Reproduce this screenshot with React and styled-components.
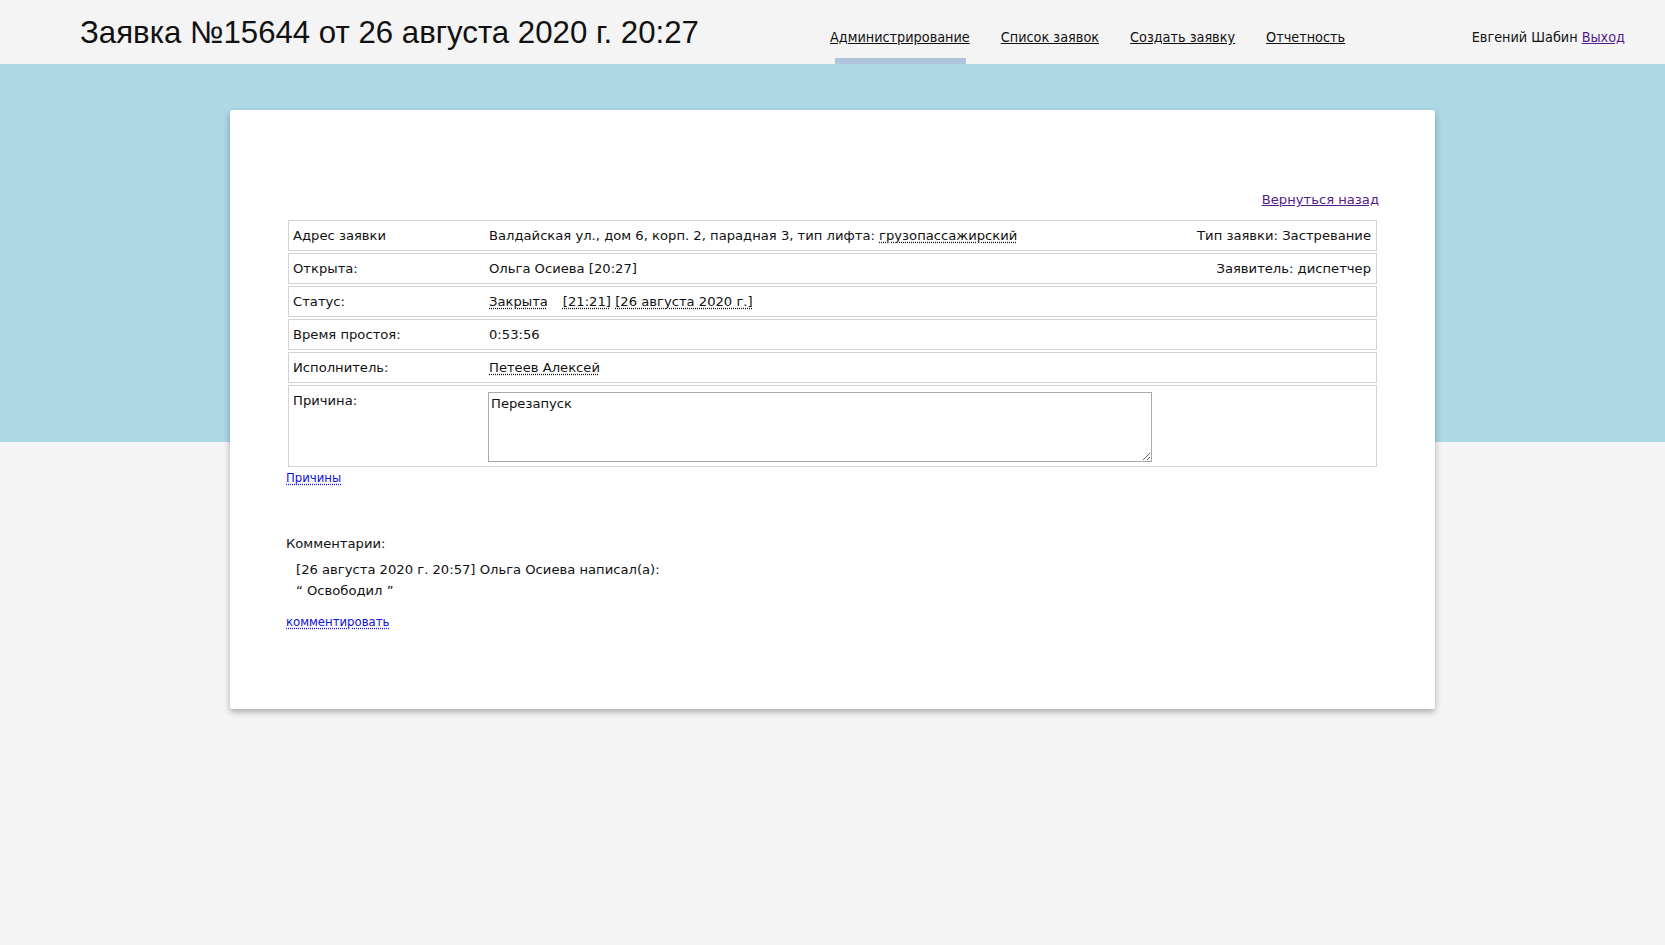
import React from "react";
import styled, { createGlobalStyle } from "styled-components";

const GlobalStyle = createGlobalStyle`
  html, body {
    margin: 0;
    padding: 0;
    background: #f4f4f4;
  }
  body {
    font-family: "DejaVu Sans", Verdana, sans-serif;
    font-size: 13.15px;
    color: #111;
  }
`;

const Header = styled.header`
  display: flex;
  height: 64px;
  background: #f4f4f4;
`;

const TitleBox = styled.div`
  flex: 0 0 830px;
  box-sizing: border-box;
  padding: 2px 0 0 80px;
  display: flex;
  align-items: center;
`;

const Title = styled.h1`
  margin: 0;
  font-family: "Liberation Sans", Arial, sans-serif;
  font-weight: normal;
  font-size: 31.2px;
  color: #111;
`;

const Nav = styled.nav`
  flex: 1;
  display: flex;
  gap: 31px;
`;

const NavItem = styled.div`
  display: flex;
  flex-direction: column;
  height: 64px;
`;

const NavLink = styled.a`
  flex: 1;
  display: flex;
  align-items: center;
  padding-top: 16px;
  font-family: "DejaVu Sans Condensed", Tahoma, sans-serif;
  font-size: 14.3px;
  color: #111;
  text-decoration: underline;
  cursor: pointer;
`;

const ActiveBar = styled.div`
  height: 6px;
  margin: 0 4px 0 5px;
  background: ${(p) => (p.$on ? "#b0c4de" : "transparent")};
`;

const User = styled.div`
  display: flex;
  align-items: center;
  padding: 10px 40px 0 0;
  font-family: "DejaVu Sans Condensed", Tahoma, sans-serif;
  font-size: 14.3px;
  color: #111;
  gap: 4px;
`;

const Visited = styled.a`
  color: #551a8b;
  text-decoration: underline;
  cursor: pointer;
`;

const Page = styled.main`
  background: linear-gradient(#add8e6 0, #add8e6 378px, #f4f4f4 378px);
  padding-top: 46px;
  min-height: 881px;
  box-sizing: border-box;
`;

const Card = styled.section`
  width: 1205px;
  min-height: 599px;
  box-sizing: border-box;
  margin: 0 auto;
  background: #fff;
  border-radius: 2px;
  box-shadow: 0 3px 6px rgba(0, 0, 0, 0.3);
  padding: 81px 56px 40px;
`;

const BackRow = styled.div`
  text-align: right;
  line-height: 18px;
  margin-bottom: 11px;
`;

const Rows = styled.div`
  display: flex;
  flex-direction: column;
  gap: 2px;
  padding: 0 2px;
`;

const Row = styled.div`
  display: grid;
  grid-template-columns: 196px 1fr auto;
  align-items: ${(p) => (p.$tall ? "start" : "center")};
  min-height: 31px;
  box-sizing: border-box;
  border: 1px solid #d3d3d3;
  padding: ${(p) => (p.$tall ? "6px 5px 4px 4px" : "1px 5px 0 4px")};
  line-height: 18px;
`;

const Label = styled.div``;

const Value = styled.div`
  white-space: nowrap;
`;

const Side = styled.div`
  text-align: right;
  white-space: nowrap;
`;

const Abbr = styled.span`
  text-decoration: underline dotted;
  text-underline-offset: 2px;
  margin-left: ${(p) => p.$gap || 0}px;
`;

const Reason = styled.textarea`
  display: block;
  width: 664px;
  height: 70px;
  box-sizing: border-box;
  margin: 0 0 0 -1px;
  padding: 2px;
  border: 1px solid #a9a9a9;
  font-family: "DejaVu Sans", Verdana, sans-serif;
  font-size: 13.15px;
  color: #111;
  line-height: 17px;
  resize: both;
`;

const DotLink = styled.a`
  font-family: "DejaVu Sans Condensed", Tahoma, sans-serif;
  font-size: 13px;
  color: #1010e0;
  text-decoration: underline dotted;
  text-underline-offset: 2px;
  cursor: pointer;
`;

const Block = styled.div`
  line-height: 20px;
  margin-top: ${(p) => p.$mt || 0}px;
  padding-left: ${(p) => p.$indent || 0}px;
`;

export default function App() {
  return (
    <>
      <GlobalStyle />
      <Header>
        <TitleBox>
          <Title>Заявка №15644 от 26 августа 2020 г. 20:27</Title>
        </TitleBox>
        <Nav>
          {["Администрирование", "Список заявок", "Создать заявку", "Отчетность"].map(
            (t, i) => (
              <NavItem key={t}>
                <NavLink>{t}</NavLink>
                <ActiveBar $on={i === 0} />
              </NavItem>
            )
          )}
        </Nav>
        <User>
          <span>Евгений Шабин</span>
          <Visited>Выход</Visited>
        </User>
      </Header>

      <Page>
        <Card>
          <BackRow>
            <Visited>Вернуться назад</Visited>
          </BackRow>
          <Rows>
            <Row>
              <Label>Адрес заявки</Label>
              <Value>
                Валдайская ул., дом 6, корп. 2, парадная 3, тип лифта:{" "}
                <Abbr>грузопассажирский</Abbr>
              </Value>
              <Side>Тип заявки: Застревание</Side>
            </Row>
            <Row>
              <Label>Открыта:</Label>
              <Value>Ольга Осиева [20:27]</Value>
              <Side>Заявитель: диспетчер</Side>
            </Row>
            <Row>
              <Label>Статус:</Label>
              <Value>
                <Abbr>Закрыта</Abbr>
                <Abbr $gap={15}>[21:21]</Abbr> <Abbr>[26 августа 2020 г.]</Abbr>
              </Value>
              <Side />
            </Row>
            <Row>
              <Label>Время простоя:</Label>
              <Value>0:53:56</Value>
              <Side />
            </Row>
            <Row>
              <Label>Исполнитель:</Label>
              <Value>
                <Abbr>Петеев Алексей</Abbr>
              </Value>
              <Side />
            </Row>
            <Row $tall>
              <Label>Причина:</Label>
              <Value>
                <Reason defaultValue="Перезапуск" />
              </Value>
              <Side />
            </Row>
          </Rows>
          <Block $mt={1}>
            <DotLink>Причины</DotLink>
          </Block>
          <Block $mt={46}>Комментарии:</Block>
          <Block $mt={6} $indent={10}>
            [26 августа 2020 г. 20:57] Ольга Осиева написал(а):
          </Block>
          <Block $mt={1} $indent={10}>
            {"\u201C Освободил \u201D"}
          </Block>
          <Block $mt={11}>
            <DotLink>комментировать</DotLink>
          </Block>
        </Card>
      </Page>
    </>
  );
}
